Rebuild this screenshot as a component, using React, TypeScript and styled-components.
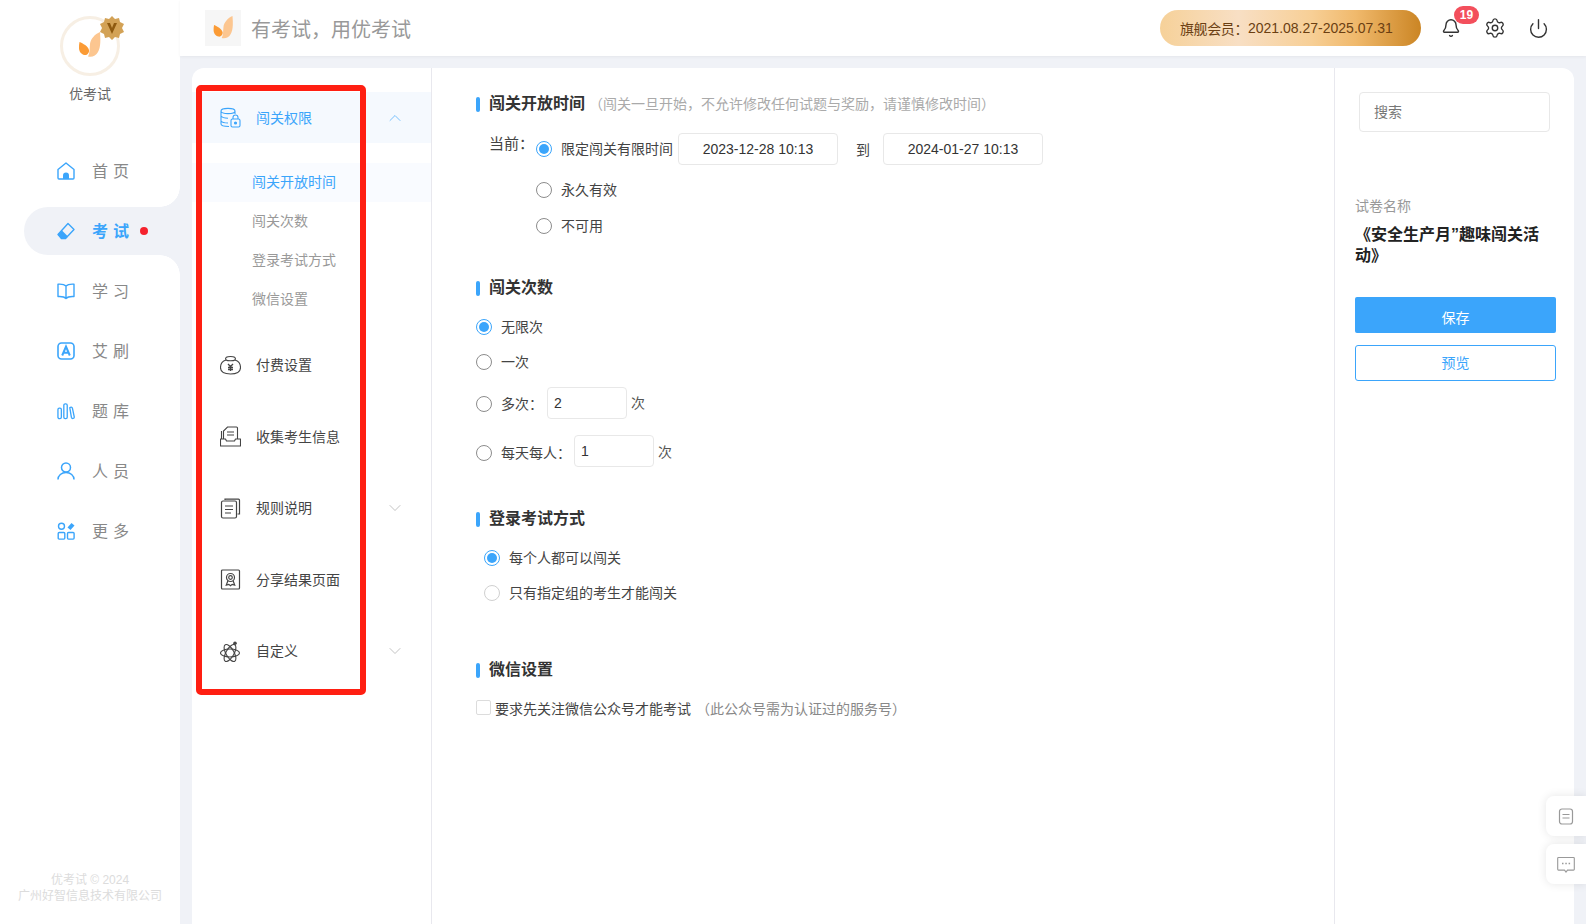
import React from "react";
import styled, { createGlobalStyle } from "styled-components";
import { Bell, Settings, Power, ChevronUp, ChevronDown } from "lucide-react";

const Global = createGlobalStyle`
  html, body { margin: 0; padding: 0; height: 100%; overflow: hidden; background: #f0f2f7; }
  body { font-family: "Liberation Sans", "Noto Sans CJK SC", sans-serif; color: #333; }
  * { box-sizing: border-box; }
`;

const Shell = styled.div`display: flex; width: 1586px; height: 924px; overflow: hidden; position: relative;`;
const Sidebar = styled.aside`width: 180px; flex: none; background: #fff; display: flex; flex-direction: column; align-items: stretch;`;
const Brand = styled.div`display: flex; flex-direction: column; align-items: center; padding-top: 16px;`;
const Avatar = styled.div`
  position: relative; width: 60px; height: 60px; border-radius: 50%; background: #fff;
  border: 3px solid #f7efe4; display: flex; align-items: center; justify-content: center;
`;
const Medal = styled.svg`position: absolute; top: -3px; right: -7px;`;
const BrandName = styled.div`font-size: 14px; line-height: 20px; margin-top: 8px; color: #666;`;
const Nav = styled.nav`display: flex; flex-direction: column; gap: 12px; margin-top: 43px;`;
const NavItem = styled.div<{ $active?: boolean }>`
  position: relative; height: 48px; margin-left: 24px; padding-left: 33px; display: flex; align-items: center;
  font-size: 16px; letter-spacing: 5px; color: ${(p) => (p.$active ? "#3ba5fb" : "#888")};
  font-weight: ${(p) => (p.$active ? 600 : 400)};
  background: ${(p) => (p.$active ? "#f0f2f7" : "transparent")};
  border-radius: 24px 0 0 24px;
  ${(p) => p.$active && `
    &::before, &::after { content: ""; position: absolute; right: 0; width: 20px; height: 20px; }
    &::before { top: -20px; background: radial-gradient(circle at 0 0, transparent 19.5px, #f0f2f7 20px); }
    &::after { bottom: -20px; background: radial-gradient(circle at 0 100%, transparent 19.5px, #f0f2f7 20px); }
  `}
`;
const NavIcon = styled.span`width: 18px; height: 18px; margin-right: 17px; display: inline-flex; flex: none;`;
const NavLabel = styled.span`margin-bottom: 2px;`;
const RedDot = styled.span`width: 8px; height: 8px; border-radius: 50%; background: #f5222d; margin-left: 6px;`;
const Copyright = styled.footer`margin-top: auto; padding-bottom: 20px; text-align: center; font-size: 12px; line-height: 16px; color: #dcdcdc;`;

const Column = styled.div`flex: 1; display: flex; flex-direction: column; min-width: 0;`;
const Topbar = styled.header`height: 56px; flex: none; background: #fff; display: flex; align-items: center; padding-left: 25px; box-shadow: 0 1px 3px rgba(0,0,0,.05);`;
const LogoTile = styled.div`width: 36px; height: 36px; background: #f6f6f6; display: flex; align-items: center; justify-content: center;`;
const Slogan = styled.div`font-size: 20px; color: #999; margin-left: 10px;`;
const Member = styled.div`
  margin-left: auto; width: 261px; height: 36px; border-radius: 18px; padding-left: 20px; display: flex; align-items: center;
  font-size: 14px; color: #6b3f12;
  background: linear-gradient(90deg, #f6d199 0%, #f8dfc4 30%, #f7cf96 58%, #f0b96c 75%, #cb8524 100%);
`;
const MemberTier = styled.span`letter-spacing: -0.4px;`;
const TopActions = styled.div`display: flex; align-items: center; margin-left: 20px; margin-right: 37px; color: #333;`;
const BellWrap = styled.div`position: relative; width: 20px; height: 22px; margin-right: 23px; padding-top: 1px;`;
const GearWrap = styled.div`width: 22px; height: 22px; margin-right: 22px;`;
const Badge = styled.span`
  position: absolute; top: -11px; left: 13px; width: 25px; height: 18px; border-radius: 9px; background: #f34f5c; color: #fff;
  font-size: 12px; font-weight: 700; line-height: 18px; text-align: center;
`;
const Board = styled.main`
  flex: 1; margin: 12px 12px 0; background: #fff; border-radius: 12px 12px 0 0; display: flex; min-height: 0; position: relative;
`;
const MenuColumn = styled.div`width: 240px; flex: none; border-right: 1px solid #e8e8ee; padding-top: 24px;`;
const MenuHead = styled.div<{ $open?: boolean; $first?: boolean }>`
  height: 51px; margin-top: ${(p) => (p.$first ? 0 : "20.5px")}; display: flex; align-items: center; padding-left: 27px;
  background: ${(p) => (p.$open ? "#f5f9fe" : "transparent")}; font-size: 14px; color: ${(p) => (p.$open ? "#3ba5fb" : "#444")};
`;
const MenuIcon = styled.span`width: 22px; height: 22px; margin-right: 15px; display: inline-flex; flex: none; align-items: center; justify-content: center;`;
const MenuLabel = styled.span`margin-bottom: 2px;`;
const Caret = styled.span<{ $open?: boolean }>`margin-left: auto; margin-right: 26px; display: inline-flex; color: ${(p) => (p.$open ? "#6bbafc" : "#bdbdbd")};`;
const SubList = styled.div`margin-top: 20px; margin-bottom: 0; display: flex; flex-direction: column;`;
const SubItem = styled.div<{ $active?: boolean }>`
  height: 39px; line-height: 39px; padding-left: 60px; font-size: 14px;
  color: ${(p) => (p.$active ? "#3ba5fb" : "#999")}; background: ${(p) => (p.$active ? "#f9fbff" : "transparent")};
`;

const Form = styled.section`flex: 1; padding: 26px 0 0 44px; min-width: 0;`;
const SectionTitle = styled.h3<{ $top?: number }>`
  margin: ${(p) => p.$top ?? 0}px 0 0; height: 20px; display: flex; align-items: center; font-size: 16px; font-weight: 700; color: #333; line-height: 20px;
  &::before { content: ""; width: 4px; height: 15px; border-radius: 2px; background: #3ba5fb; margin-right: 9px; }
`;
const Hint = styled.span`font-size: 14px; font-weight: 400; color: #aaa; margin-left: 4px;`;
const Row = styled.div<{ $top?: number; $indent?: number }>`
  display: flex; align-items: center; height: 32px; margin-top: ${(p) => p.$top ?? 0}px; padding-left: ${(p) => p.$indent ?? 0}px; font-size: 14px; color: #444;
`;
const RowText = styled.span`margin-bottom: 2px;`;
const CurrentLabel = styled.span`width: 47px; font-size: 15px; color: #444; margin-bottom: 14px;`;
const Radio = styled.span<{ $on?: boolean; $dim?: boolean }>`
  width: 16px; height: 16px; border-radius: 50%; flex: none; margin-right: 9px; background: #fff; display: inline-flex; align-items: center; justify-content: center;
  border: 1px solid ${(p) => (p.$on ? "#3ba5fb" : p.$dim ? "#d0d0d0" : "#8c8c8c")};
  &::after { content: ""; width: 10px; height: 10px; border-radius: 50%; background: ${(p) => (p.$on ? "#3ba5fb" : "transparent")}; }
`;
const FieldBox = styled.div<{ $w: number; $center?: boolean; $left?: number; $raise?: number }>`
  width: ${(p) => p.$w}px; height: 32px; margin-left: ${(p) => p.$left ?? 0}px; margin-bottom: ${(p) => p.$raise ?? 0}px;
  border: 1px solid #e8e8e8; border-radius: 4px; display: flex; align-items: center;
  justify-content: ${(p) => (p.$center ? "center" : "flex-start")}; padding-left: ${(p) => (p.$center ? 0 : 6)}px; color: #333; font-size: 14px;
`;
const Unit = styled.span`margin-left: 4px; color: #555; font-size: 14px; margin-bottom: 4px;`;
const Through = styled.span`margin-left: 18px; margin-right: 13px; color: #444;`;
const Check = styled.span`width: 15px; height: 15px; border: 1px solid #dcdcdc; border-radius: 2px; margin-right: 4px; margin-bottom: 4px;`;
const Muted = styled.span`color: #888; margin-left: 5px;`;

const Side = styled.aside`width: 240px; flex: none; border-left: 1px solid #e8e8ee; padding: 24px 18px 0 20px;`;
const Search = styled.div`width: 191px; height: 40px; margin-left: 4px; border: 1px solid #e8e8e8; border-radius: 4px; padding: 0 0 2px 14px; display: flex; align-items: center; font-size: 14px; color: #777;`;
const PaperLabel = styled.div`margin-top: 64px; font-size: 14px; line-height: 20px; color: #999;`;
const PaperName = styled.div`margin-top: 8px; padding-right: 10px; font-size: 16px; font-weight: 700; line-height: 21px; color: #222;`;
const SaveBtn = styled.div`margin-top: 31px; height: 36px; padding-top: 3px; background: #3ba5fb; border-radius: 2px; color: #fff; font-size: 14px; display: flex; align-items: center; justify-content: center;`;
const PreviewBtn = styled.div`margin-top: 12px; height: 36px; padding-bottom: 2px; background: #fff; border: 1px solid #3ba5fb; border-radius: 3px; color: #3ba5fb; font-size: 14px; display: flex; align-items: center; justify-content: center;`;

/* Highlight frame laid over the settings menu */
const Frame = styled.div`position: absolute; left: 196px; top: 85px; width: 170px; height: 610px; border: 6px solid #ff1f12; border-radius: 5px; pointer-events: none;`;
const Floaters = styled.div`position: absolute; right: 0; top: 796px; display: flex; flex-direction: column; gap: 8px;`;
const Floater = styled.div`width: 40px; height: 40px; background: #fff; border-radius: 8px 0 0 8px; box-shadow: 0 0 10px rgba(0,0,0,.1); display: flex; align-items: center; justify-content: center;`;

const Leaf = ({ size = 30 }: { size?: number }) => (
  <svg width={size} height={size} viewBox="0 0 30 30">
    <path d="M25 1C25.500 8 26 16 23 21 21 25 17 26.500 13 25.500 15 22 14.500 17 15 13 15.500 8 20 3 25 1z" fill="#fcc690" />
    <path d="M4.500 11C8 12.500 13 15 14 19 14.500 22 12 24.500 9.500 24 6 23.500 4 20 4 17 4 15 4 13 4.500 11z" fill="#fb9b35" />
  </svg>
);

const blue = "#3ba5fb";
const HomeIcon = () => (
  <svg width="18" height="18" viewBox="0 0 18 18" fill="none" stroke={blue} strokeWidth="1.4">
    <path d="M1 7.500 9 1l8 6.500V16a1 1 0 0 1-1 1H2a1 1 0 0 1-1-1z" strokeLinejoin="round" />
    <path d="M6 17v-3.500a3 3 0 0 1 6 0V17z" fill={blue} stroke="none" />
  </svg>
);
const EraserIcon = () => (
  <svg width="18" height="18" viewBox="0 0 18 18" fill="none" stroke={blue} strokeWidth="1.4">
    <path d="M11 1.500 17 7.500 8.500 16.500H4.500L1 12.500z" strokeLinejoin="round" />
    <path d="M.8 12.500 5 8.500l6 6-2.500 2.500H4.300z" fill={blue} stroke="none" />
  </svg>
);
const BookIcon = () => (
  <svg width="18" height="18" viewBox="0 0 18 18" fill="none" stroke={blue} strokeWidth="1.4">
    <path d="M9 4C7.500 2.500 4 2 1 2.200v12.300c3-.2 6.500.2 8 2 1.500-1.800 5-2.200 8-2V2.200C14 2 10.500 2.500 9 4zM9 4v12.500" strokeLinejoin="round" />
  </svg>
);
const ABoxIcon = () => (
  <svg width="18" height="18" viewBox="0 0 18 18" fill="none">
    <rect x="1" y="1" width="16" height="16" rx="3.500" stroke={blue} strokeWidth="1.600" />
    <path d="M5.200 13.500 9 4.500l3.800 9M6.500 10.800h5" stroke={blue} strokeWidth="2" />
  </svg>
);
const BarsIcon = () => (
  <svg width="19" height="18" viewBox="0 0 19 18" fill="none" stroke={blue} strokeWidth="1.4">
    <rect x="1" y="6" width="3.600" height="11" rx="1.500" />
    <rect x="7.200" y="1.500" width="3.600" height="15.500" rx="1.500" />
    <path d="M13.500 5.500c1-1 2.300-.8 2.700.3l2 9.500c.2 1.700-2.500 2.300-3 .5z" />
  </svg>
);
const UserIcon = () => (
  <svg width="18" height="18" viewBox="0 0 18 18" fill="none" stroke={blue} strokeWidth="1.500">
    <circle cx="9" cy="5.500" r="4.500" />
    <path d="M1 17.500c0-4 3.500-7 8-7s8 3 8 7" />
  </svg>
);
const MoreIcon = () => (
  <svg width="18" height="18" viewBox="0 0 18 18" fill="none" stroke={blue} strokeWidth="1.4">
    <circle cx="4.500" cy="4.200" r="3" />
    <rect x="1.200" y="10.500" width="6.600" height="6.600" rx="1" />
    <rect x="10.500" y="10.500" width="6.600" height="6.600" rx="1" />
    <path d="M10.500 5.500 14.500 1l3 2.500-4 4.500z" fill={blue} stroke="none" />
  </svg>
);

const ink = "#444";
const DbLockIcon = () => (
  <svg width="21" height="21" viewBox="0 0 21 21" fill="none" stroke={blue} strokeWidth="1.100">
    <path d="M1 4c0-3.500 14-3.500 14 0 0 3.500-14 3.500-14 0zM1 4v13c0 1.500 3 2.500 8 2.500M1 9c1 1.500 4 2.200 7 2.200M1 14c1 1.500 4 2 7 2M15 4v3" />
    <rect x="11" y="12" width="9" height="8" rx="1.500" />
    <path d="M13 12v-1.500a2.500 2.500 0 0 1 5 0V12" />
    <circle cx="15.500" cy="16" r="1" fill={blue} />
  </svg>
);
const PurseIcon = () => (
  <svg width="21" height="21" viewBox="0 0 21 21" fill="none" stroke={ink} strokeWidth="1.100">
    <path d="M6 5C4.500 2.500 7 1.500 10.500 1.500S16.500 2.500 15 5" />
    <path d="M6 5c1.500 1 7.500 1 9 0 3 1 5.500 3.500 5.500 7.500 0 5-4 6.500-10 6.500S.5 17.500.5 12.500C.5 8.500 3 6 6 5z" />
    <path d="M8 9l2.500 2.500L13 9M10.500 11.500V16M8 12.500h5M8 14.500h5" strokeWidth="1.300" />
  </svg>
);
const InboxDocIcon = () => (
  <svg width="21" height="21" viewBox="0 0 21 21" fill="none" stroke={ink} strokeWidth="1.100">
    <path d="M3.500 13V5L7.500 1H16.500a1 1 0 0 1 1 1v11" />
    <path d="M1.500 5v8M7 6h7M7 9h7" />
    <path d="M.5 13h5l1 2h8l1-2h5v7H.5z" strokeLinejoin="round" />
  </svg>
);
const PagesIcon = () => (
  <svg width="21" height="21" viewBox="0 0 21 21" fill="none" stroke={ink} strokeWidth="1.200">
    <rect x="1.500" y="3" width="15" height="17" rx="1.500" />
    <path d="M5 2V1.200h13.500a1 1 0 0 1 1 1V16h-2M5 8h8M5 11.500h8M5 15h6" />
  </svg>
);
const CertIcon = () => (
  <svg width="21" height="21" viewBox="0 0 21 21" fill="none" stroke={ink} strokeWidth="1.200">
    <rect x="1.500" y="1" width="18" height="19" rx="1" />
    <circle cx="10.500" cy="8.500" r="4" />
    <circle cx="10.500" cy="8.500" r="1.800" />
    <path d="M7.800 12l-1.500 4 2.500-.7 1.700 1.500 1.700-1.500 2.500.7-1.500-4" />
  </svg>
);
const AtomIcon = () => (
  <svg width="21" height="21" viewBox="0 0 21 21" fill="none" stroke={ink} strokeWidth="1.100">
    <ellipse cx="10" cy="12" rx="9.500" ry="4" />
    <ellipse cx="10" cy="12" rx="9.500" ry="4" transform="rotate(60 10 12)" />
    <ellipse cx="10" cy="12" rx="9.500" ry="4" transform="rotate(120 10 12)" />
    <circle cx="15" cy="2.200" r="1.800" fill={ink} stroke="none" />
  </svg>
);

const navEntries: { label: string; icon: React.ReactNode; active?: boolean }[] = [
  { label: "首页", icon: <HomeIcon /> },
  { label: "考试", icon: <EraserIcon />, active: true },
  { label: "学习", icon: <BookIcon /> },
  { label: "艾刷", icon: <ABoxIcon /> },
  { label: "题库", icon: <BarsIcon /> },
  { label: "人员", icon: <UserIcon /> },
  { label: "更多", icon: <MoreIcon /> },
];

const menuEntries: { label: string; icon: React.ReactNode; caret?: boolean }[] = [
  { label: "付费设置", icon: <PurseIcon /> },
  { label: "收集考生信息", icon: <InboxDocIcon /> },
  { label: "规则说明", icon: <PagesIcon />, caret: true },
  { label: "分享结果页面", icon: <CertIcon /> },
  { label: "自定义", icon: <AtomIcon />, caret: true },
];

export default function App() {
  return (
    <Shell>
      <Global />
      <Sidebar>
        <Brand>
          <Avatar>
            <Leaf size={30} />
            <Medal width="24" height="24" viewBox="0 0 24 24">
              <path d="M12 0l3 3 4-1 1 4 4 2-2 4 2 4-4 2-1 4-4-1-3 3-3-3-4 1-1-4-4-2 2-4-2-4 4-2 1-4 4 1z" fill="#d3a256" />
              <path d="M7 7l5 11 5-11h-3l-2 5-2-5z" fill="#8f5a10" />
            </Medal>
          </Avatar>
          <BrandName>优考试</BrandName>
        </Brand>
        <Nav>
          {navEntries.map((n) => (
            <NavItem key={n.label} $active={n.active}>
              <NavIcon>{n.icon}</NavIcon>
              <NavLabel>{n.label}</NavLabel>
              {n.active && <RedDot />}
            </NavItem>
          ))}
        </Nav>
        <Copyright>
          优考试 © 2024
          <br />
          广州好智信息技术有限公司
        </Copyright>
      </Sidebar>

      <Column>
        <Topbar>
          <LogoTile>
            <Leaf size={27} />
          </LogoTile>
          <Slogan>有考试，用优考试</Slogan>
          <Member><MemberTier>旗舰会员：</MemberTier>2021.08.27-2025.07.31</Member>
          <TopActions>
            <BellWrap>
              <Bell size={20} strokeWidth={1.7} />
              <Badge>19</Badge>
            </BellWrap>
            <GearWrap>
              <Settings size={22} strokeWidth={1.5} />
            </GearWrap>
            <Power size={21} strokeWidth={1.6} />
          </TopActions>
        </Topbar>

        <Board>
          <MenuColumn>
            <MenuHead $open $first>
              <MenuIcon><DbLockIcon /></MenuIcon>
              <MenuLabel>闯关权限</MenuLabel>
              <Caret $open><ChevronUp size={20} strokeWidth={1.1} /></Caret>
            </MenuHead>
            <SubList>
              <SubItem $active>闯关开放时间</SubItem>
              <SubItem>闯关次数</SubItem>
              <SubItem>登录考试方式</SubItem>
              <SubItem>微信设置</SubItem>
            </SubList>
            {menuEntries.map((m) => (
              <MenuHead key={m.label}>
                <MenuIcon>{m.icon}</MenuIcon>
                <MenuLabel>{m.label}</MenuLabel>
                {m.caret && <Caret><ChevronDown size={20} strokeWidth={1.1} /></Caret>}
              </MenuHead>
            ))}
          </MenuColumn>

          <Form>
            <SectionTitle>
              闯关开放时间
              <Hint>（闯关一旦开始，不允许修改任何试题与奖励，请谨慎修改时间）</Hint>
            </SectionTitle>
            <Row $top={19} $indent={13}>
              <CurrentLabel>当前：</CurrentLabel>
              <Radio $on />
              <RowText>限定闯关有限时间</RowText>
              <FieldBox $w={160} $center $left={5}>2023-12-28 10:13</FieldBox>
              <Through>到</Through>
              <FieldBox $w={160} $center>2024-01-27 10:13</FieldBox>
            </Row>
            <Row $top={9} $indent={60}><Radio /><RowText>永久有效</RowText></Row>
            <Row $top={4} $indent={60}><Radio /><RowText>不可用</RowText></Row>

            <SectionTitle $top={36}>闯关次数</SectionTitle>
            <Row $top={13}><Radio $on /><RowText>无限次</RowText></Row>
            <Row $top={3}><Radio /><RowText>一次</RowText></Row>
            <Row $top={10}>
              <Radio /><RowText>多次：</RowText>
              <FieldBox $w={80} $left={4} $raise={3}>2</FieldBox>
              <Unit>次</Unit>
            </Row>
            <Row $top={17}>
              <Radio /><RowText>每天每人：</RowText>
              <FieldBox $w={80} $left={3} $raise={5}>1</FieldBox>
              <Unit>次</Unit>
            </Row>

            <SectionTitle $top={40}>登录考试方式</SectionTitle>
            <Row $top={13} $indent={8}><Radio $on /><RowText>每个人都可以闯关</RowText></Row>
            <Row $top={3} $indent={8}><Radio $dim /><RowText>只有指定组的考生才能闯关</RowText></Row>

            <SectionTitle $top={51}>微信设置</SectionTitle>
            <Row $top={13}>
              <Check /><RowText>要求先关注微信公众号才能考试<Muted>（此公众号需为认证过的服务号）</Muted></RowText>
            </Row>
          </Form>

          <Side>
            <Search>搜索</Search>
            <PaperLabel>试卷名称</PaperLabel>
            <PaperName>《安全生产月”趣味闯关活动》</PaperName>
            <SaveBtn>保存</SaveBtn>
            <PreviewBtn>预览</PreviewBtn>
          </Side>
        </Board>
      </Column>

      <Frame />
      <Floaters>
        <Floater>
          <svg width="16" height="17" viewBox="0 0 16 17" fill="none" stroke="#999" strokeWidth="1.200">
            <rect x="1.500" y="1" width="13" height="15" rx="2.500" />
            <path d="M4.500 6.500h7M4.500 10h7" />
          </svg>
        </Floater>
        <Floater>
          <svg width="18" height="17" viewBox="0 0 18 17" fill="none" stroke="#999" strokeWidth="1.100">
            <path d="M1.500 1.500h15a.8.8 0 0 1 .8.800v11a.8.8 0 0 1-.8.800H10.500L9 16l-1.500-1.900h-6a.8.8 0 0 1-.8-.800v-11a.8.8 0 0 1 .8-.800z" />
            <path d="M5 7.500h1.500M8.300 7.500h1.500M11.600 7.500h1.500" strokeWidth="1.400" />
          </svg>
        </Floater>
      </Floaters>
    </Shell>
  );
}
